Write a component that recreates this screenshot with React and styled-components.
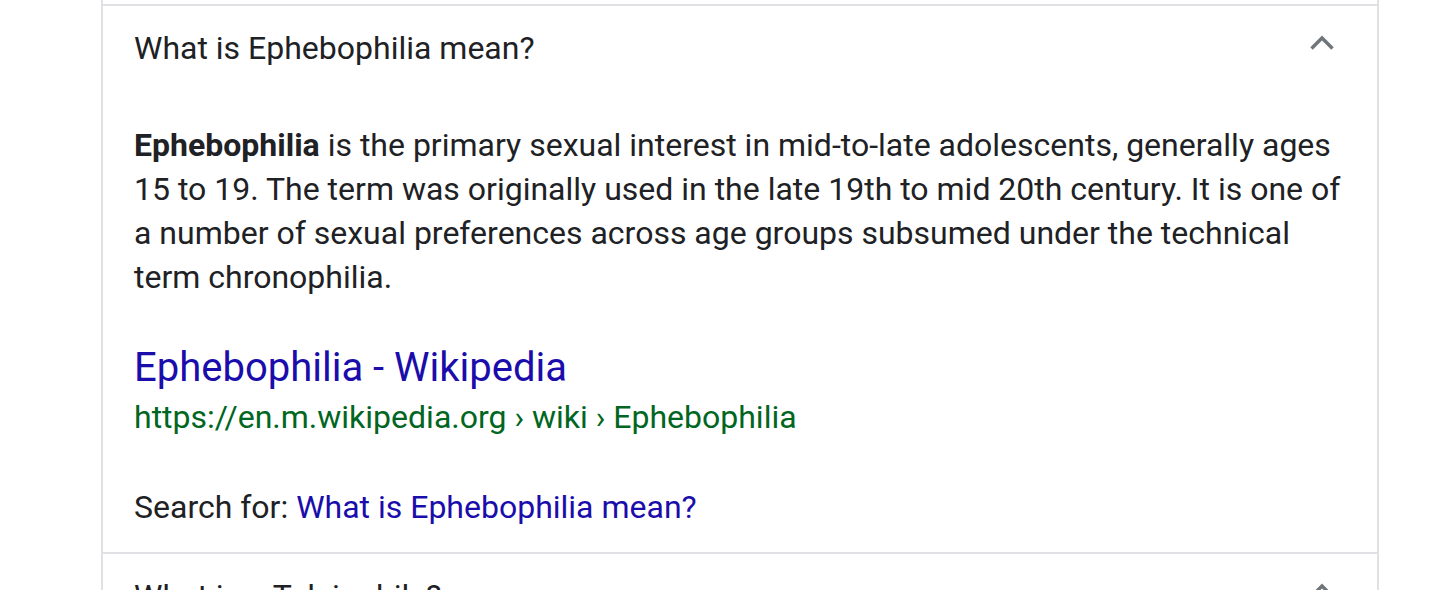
import React from "react";
import styled, { createGlobalStyle } from "styled-components";

const GlobalStyle = createGlobalStyle`
  html, body {
    margin: 0;
    padding: 0;
    background: #ffffff;
  }
  body {
    font-family: Roboto, "Noto Sans", Arial, sans-serif;
    color: #202124;
    overflow: hidden;
  }
`;

const Page = styled.div`
  width: 1438px;
  height: 590px;
  overflow: hidden;
`;

const Card = styled.div`
  margin-left: 101px;
  width: 1274px;
  height: 590px;
  border-left: 2px solid #dfe1e5;
  border-right: 2px solid #dfe1e5;
  padding-top: 4px;
`;

const Item = styled.div`
  border-top: 2px solid #dfe1e5;
`;

const Header = styled.div`
  display: flex;
  align-items: flex-start;
  justify-content: space-between;
  padding: 20px 43px 18px 31px;
`;

const Question = styled.div`
  font-size: 32px;
  line-height: 44px;
  color: #202124;
`;

const Chevron = styled.svg`
  width: 24px;
  height: 14px;
  flex: none;
  margin-top: 10px;
  overflow: visible;
`;

const Answer = styled.div`
  padding: 35px 32px 23px 31px;
`;

const Paragraph = styled.p`
  margin: 0;
  font-size: 32px;
  line-height: 44px;
  color: #202124;

  b {
    font-weight: 700;
  }
`;

const Source = styled.div`
  margin-top: 45px;
  display: flex;
  flex-direction: column;
`;

const SourceTitle = styled.a`
  font-size: 40px;
  line-height: 48px;
  color: #1a0dab;
  text-decoration: none;
`;

const SourceUrl = styled.div`
  margin-top: 3px;
  font-size: 32px;
  line-height: 44px;
  color: #006621;
`;

const SearchFor = styled.div`
  margin-top: 46px;
  font-size: 32px;
  line-height: 44px;
  color: #202124;

  a {
    color: #1a0dab;
    text-decoration: none;
  }
`;

const UpArrow = () => (
  <Chevron viewBox="0 0 24 14">
    <path
      d="M1.5 12.5 L12 2 L22.5 12.5"
      fill="none"
      stroke="#70757a"
      strokeWidth="3.4"
    />
  </Chevron>
);

export default function App() {
  return (
    <Page>
      <GlobalStyle />
      <Card>
        <Item>
          <Header>
            <Question>What is Ephebophilia mean?</Question>
            <UpArrow />
          </Header>
          <Answer>
            <Paragraph>
              <b>Ephebophilia</b> is the primary sexual interest in
              mid-to-late adolescents, generally ages 15 to 19. The term was
              originally used in the late 19th to mid 20th century. It is one
              of a number of sexual preferences across age groups subsumed
              under the technical term chronophilia.
            </Paragraph>
            <Source>
              <SourceTitle href="#">Ephebophilia - Wikipedia</SourceTitle>
              <SourceUrl>https://en.m.wikipedia.org › wiki › Ephebophilia</SourceUrl>
            </Source>
            <SearchFor>
              Search for: <a href="#">What is Ephebophilia mean?</a>
            </SearchFor>
          </Answer>
        </Item>
        <Item>
          <Header>
            <Question>What is a Teleiophile?</Question>
            <UpArrow />
          </Header>
        </Item>
      </Card>
    </Page>
  );
}
